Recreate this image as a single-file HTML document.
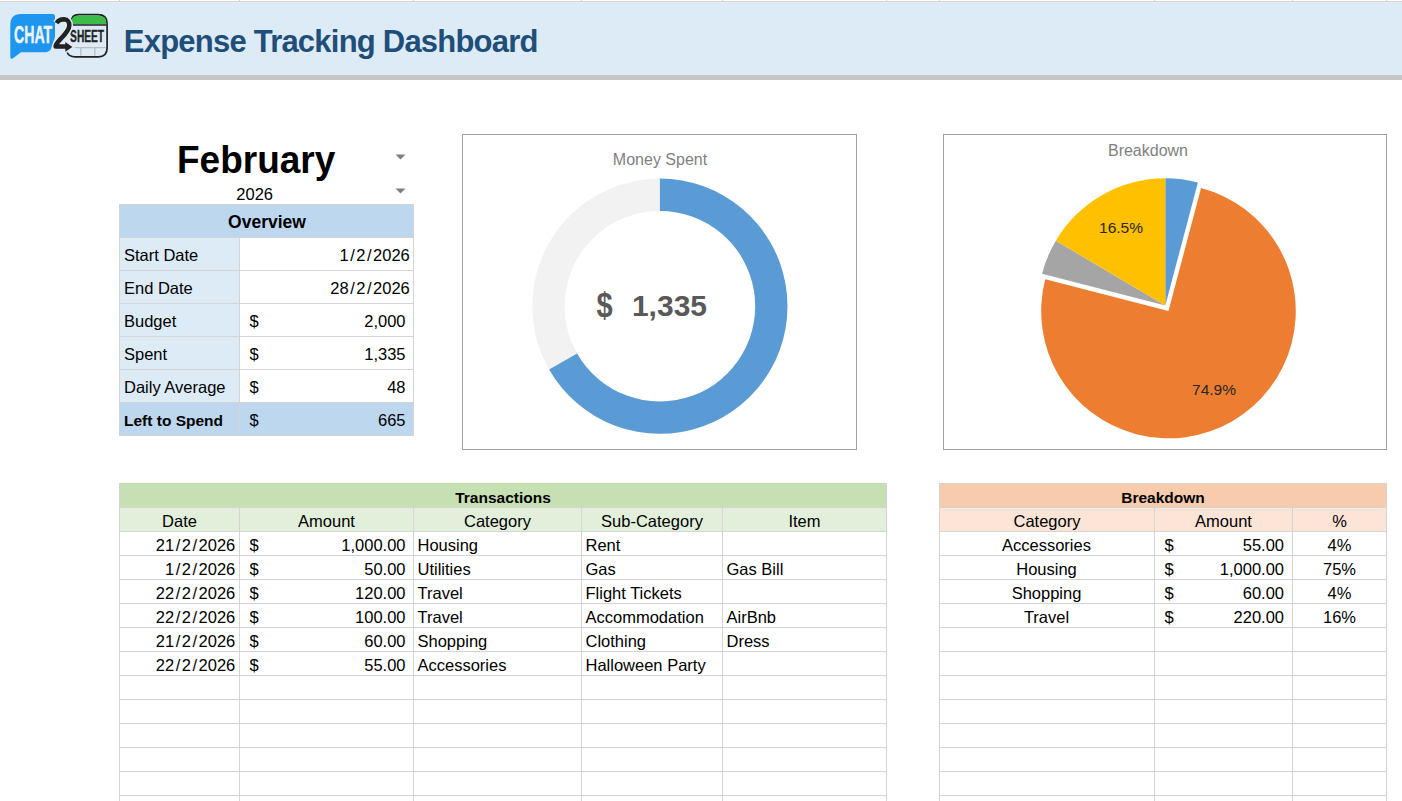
<!DOCTYPE html>
<html><head><meta charset="utf-8"><style>
html,body{margin:0;padding:0;background:#fff;}
body{width:1402px;height:801px;overflow:hidden;position:relative;font-family:"Liberation Sans",sans-serif;}
.r{position:absolute;}
.t{position:absolute;line-height:24px;white-space:nowrap;}
</style></head><body>
<div class="r" style="left:0px;top:1px;width:1402px;height:1px;background:#D4D4D4;"></div>
<div class="r" style="left:119px;top:0px;width:1px;height:1px;background:#D4D4D4;"></div>
<div class="r" style="left:239px;top:0px;width:1px;height:1px;background:#D4D4D4;"></div>
<div class="r" style="left:413px;top:0px;width:1px;height:1px;background:#D4D4D4;"></div>
<div class="r" style="left:581px;top:0px;width:1px;height:1px;background:#D4D4D4;"></div>
<div class="r" style="left:722px;top:0px;width:1px;height:1px;background:#D4D4D4;"></div>
<div class="r" style="left:886px;top:0px;width:1px;height:1px;background:#D4D4D4;"></div>
<div class="r" style="left:939px;top:0px;width:1px;height:1px;background:#D4D4D4;"></div>
<div class="r" style="left:1154px;top:0px;width:1px;height:1px;background:#D4D4D4;"></div>
<div class="r" style="left:1292px;top:0px;width:1px;height:1px;background:#D4D4D4;"></div>
<div class="r" style="left:1386px;top:0px;width:1px;height:1px;background:#D4D4D4;"></div>
<div class="r" style="left:0px;top:2px;width:1402px;height:73px;background:#DDEBF7;"></div>
<div class="r" style="left:0px;top:75px;width:1402px;height:5px;background:#C6C6C6;"></div>
<svg class="r" style="left:0;top:0" width="120" height="75" viewBox="0 0 120 75">
<path d="M21,14 H52.5 Q55,14 55,16.5 V37 L51.5,47.5 Q50,52.2 45,52.2 H21 L13,58.2 Q10.3,59.8 10.3,56.5 V25 Q10.3,14 21,14 Z" fill="#1E96F0"/>
<text transform="translate(14.0,42.6) scale(0.585,1)" font-family="Liberation Sans" font-weight="700" font-size="24.2" fill="#EEF3F8" stroke="#EEF3F8" stroke-width="0.5">CHAT</text>
<path d="M71.4,24.5 V22 Q71.4,14.7 78.5,14.7 H98 Q107.1,14.7 107.1,23.5 V48 Q107.1,56.8 98.5,56.8 H75 Q69,56.8 67.2,52.5" fill="none" stroke="#222" stroke-width="1.7"/>
<path d="M71.4,24.3 V22 Q71.4,15.5 78.5,15.5 H98 Q106.2,15.5 106.2,23 V24.3 Z" fill="#3DBB4A"/>
<path d="M71.4,25 H106.5" stroke="#222" stroke-width="1.4" fill="none"/>
<path d="M74.7,47.7 H106 M80.8,47.7 V55.8 M94.8,47.7 V55.8" stroke="#BDBDBD" stroke-width="1.3" fill="none"/>
<text transform="translate(70.1,41.8) scale(0.60,1)" font-family="Liberation Sans" font-weight="700" font-size="17" fill="#222" stroke="#222" stroke-width="0.4">SHEET</text>
<path d="M56.6,23.2 C58.6,19.6 61.5,19.3 64,19.3 C68,19.4 69.4,22.3 69.3,25.6 C69.1,30 65.5,33.8 61.5,38 C58.2,41.5 55.6,44 55.6,46.6 H66" fill="none" stroke="#DDEBF7" stroke-width="7.5" stroke-linejoin="miter"/>
<path d="M56.6,23.2 C58.6,19.6 61.5,19.3 64,19.3 C68,19.4 69.4,22.3 69.3,25.6 C69.1,30 65.5,33.8 61.5,38 C58.2,41.5 55.6,44 55.6,46.6 H66" fill="none" stroke="#222" stroke-width="4.5" stroke-linejoin="round"/>
<path d="M65.3,42 L72.4,46.9 L65.3,51.8 Z" fill="#222"/>
</svg>
<div class="t" style="left:123.80px;top:29.56px;width:400px;text-align:left;font-size:31px;font-weight:700;color:#1F4E79;letter-spacing:-0.78px;">Expense Tracking Dashboard</div>
<div class="t" style="left:106.20px;top:149.18px;width:300px;text-align:center;font-size:37px;font-weight:700;color:#000;transform:scaleY(1.04);transform-origin:0 20px;">February</div>
<div class="t" style="left:154.70px;top:181.78px;width:200px;text-align:center;font-size:16.5px;color:#000;">2026</div>
<svg class="r" style="left:395px;top:153.7px" width="11" height="6"><path d="M0.5,0.5 L10.5,0.5 L5.5,5.5 Z" fill="#808080"/></svg>
<svg class="r" style="left:395px;top:188px" width="11" height="6"><path d="M0.5,0.5 L10.5,0.5 L5.5,5.5 Z" fill="#808080"/></svg>
<div class="r" style="left:120px;top:205px;width:293px;height:32px;background:#BDD7EE;"></div>
<div class="r" style="left:120px;top:238px;width:119px;height:32px;background:#DDEBF7;"></div>
<div class="r" style="left:120px;top:271px;width:119px;height:32px;background:#DDEBF7;"></div>
<div class="r" style="left:120px;top:304px;width:119px;height:32px;background:#DDEBF7;"></div>
<div class="r" style="left:120px;top:337px;width:119px;height:32px;background:#DDEBF7;"></div>
<div class="r" style="left:120px;top:370px;width:119px;height:32px;background:#DDEBF7;"></div>
<div class="r" style="left:120px;top:403px;width:293px;height:32px;background:#BDD7EE;"></div>
<div class="r" style="left:119px;top:204px;width:295px;height:1px;background:#D4D4D4;"></div>
<div class="r" style="left:119px;top:237px;width:295px;height:1px;background:#D4D4D4;"></div>
<div class="r" style="left:119px;top:270px;width:295px;height:1px;background:#D4D4D4;"></div>
<div class="r" style="left:119px;top:303px;width:295px;height:1px;background:#D4D4D4;"></div>
<div class="r" style="left:119px;top:336px;width:295px;height:1px;background:#D4D4D4;"></div>
<div class="r" style="left:119px;top:369px;width:295px;height:1px;background:#D4D4D4;"></div>
<div class="r" style="left:119px;top:402px;width:295px;height:1px;background:#D4D4D4;"></div>
<div class="r" style="left:119px;top:435px;width:295px;height:1px;background:#D4D4D4;"></div>
<div class="r" style="left:119px;top:204px;width:1px;height:232px;background:#D4D4D4;"></div>
<div class="r" style="left:413px;top:204px;width:1px;height:232px;background:#D4D4D4;"></div>
<div class="r" style="left:239px;top:237px;width:1px;height:198px;background:#D4D4D4;"></div>
<div class="t" style="left:167.00px;top:209.64px;width:200px;text-align:center;font-size:17.5px;font-weight:700;color:#000;">Overview</div>
<div class="t" style="left:124.00px;top:243.28px;width:400px;text-align:left;font-size:16.5px;color:#000;">Start Date</div>
<div class="t" style="left:259.80px;top:243.28px;width:150px;text-align:right;font-size:16.5px;color:#000;">1<span style="margin:0 1.5px">/</span>2<span style="margin:0 1.5px">/</span>2026</div>
<div class="t" style="left:124.00px;top:276.28px;width:400px;text-align:left;font-size:16.5px;color:#000;">End Date</div>
<div class="t" style="left:259.80px;top:276.28px;width:150px;text-align:right;font-size:16.5px;color:#000;">28<span style="margin:0 1.5px">/</span>2<span style="margin:0 1.5px">/</span>2026</div>
<div class="t" style="left:124.00px;top:309.28px;width:400px;text-align:left;font-size:16.5px;color:#000;">Budget</div>
<div class="t" style="left:249.50px;top:309.28px;width:400px;text-align:left;font-size:16.5px;color:#000;">$</div>
<div class="t" style="left:255.50px;top:309.28px;width:150px;text-align:right;font-size:16.5px;color:#000;">2,000</div>
<div class="t" style="left:124.00px;top:342.28px;width:400px;text-align:left;font-size:16.5px;color:#000;">Spent</div>
<div class="t" style="left:249.50px;top:342.28px;width:400px;text-align:left;font-size:16.5px;color:#000;">$</div>
<div class="t" style="left:255.50px;top:342.28px;width:150px;text-align:right;font-size:16.5px;color:#000;">1,335</div>
<div class="t" style="left:124.00px;top:375.28px;width:400px;text-align:left;font-size:16.5px;color:#000;">Daily Average</div>
<div class="t" style="left:249.50px;top:375.28px;width:400px;text-align:left;font-size:16.5px;color:#000;">$</div>
<div class="t" style="left:255.50px;top:375.28px;width:150px;text-align:right;font-size:16.5px;color:#000;">48</div>
<div class="t" style="left:124.00px;top:408.63px;width:400px;text-align:left;font-size:15.5px;font-weight:700;color:#000;">Left to Spend</div>
<div class="t" style="left:249.50px;top:408.28px;width:400px;text-align:left;font-size:16.5px;color:#000;">$</div>
<div class="t" style="left:255.50px;top:408.28px;width:150px;text-align:right;font-size:16.5px;color:#000;">665</div>
<div class="r" style="left:462px;top:134px;width:395px;height:316px;background:#fff;box-sizing:border-box;border:1px solid #A0A0A0;"></div>
<div class="r" style="left:943px;top:134px;width:444px;height:316px;background:#fff;box-sizing:border-box;border:1px solid #A0A0A0;"></div>
<svg class="r" style="left:0;top:0" width="1402" height="801">
<path d="M549.06,369.42 A127.6,127.6 0 0 1 659.90,178.60 L659.90,210.90 A95.3,95.3 0 0 0 577.12,353.42 Z" fill="#F2F2F2"/>
<path d="M659.90,178.60 A127.6,127.6 0 1 1 549.06,369.42 L577.12,353.42 A95.3,95.3 0 1 0 659.90,210.90 Z" fill="#5B9BD5"/>
<path d="M1165.30,305.60 L1165.30,178.30 A127.3,127.3 0 0 1 1197.89,182.54 Z" fill="#5B9BD5"/>
<path d="M1168.48,311.04 L1201.07,187.98 A127.3,127.3 0 1 1 1045.23,279.18 Z" fill="#ED7D31"/>
<path d="M1165.30,305.60 L1042.05,273.74 A127.3,127.3 0 0 1 1055.81,240.66 Z" fill="#A5A5A5"/>
<path d="M1165.30,305.60 L1055.81,240.66 A127.3,127.3 0 0 1 1165.30,178.30 Z" fill="#FFC000"/>
</svg>
<div class="t" style="left:560.00px;top:148.46px;width:200px;text-align:center;font-size:16px;color:#7F7F7F;">Money Spent</div>
<div class="t" style="left:1048.00px;top:139.46px;width:200px;text-align:center;font-size:16px;color:#7F7F7F;">Breakdown</div>
<div class="t" style="left:596.50px;top:293.95px;width:400px;text-align:left;font-size:29px;font-weight:700;color:#595959;transform:scaleY(1.22);transform-origin:0 15.2px;">$</div>
<div class="t" style="left:507.00px;top:293.91px;width:200px;text-align:right;font-size:30px;font-weight:700;color:#595959;">1,335</div>
<div class="t" style="left:1071.00px;top:216.13px;width:100px;text-align:center;font-size:15.5px;color:#262626;">16.5%</div>
<div class="t" style="left:1164.00px;top:377.63px;width:100px;text-align:center;font-size:15.5px;color:#262626;">74.9%</div>
<div class="r" style="left:120px;top:483px;width:766px;height:24px;background:#C6E0B4;"></div>
<div class="r" style="left:120px;top:483px;width:766px;height:1px;background:#C1DCAB;"></div>
<div class="r" style="left:120px;top:508px;width:766px;height:23px;background:#E2EFDA;"></div>
<div class="r" style="left:119px;top:507px;width:768px;height:1px;background:#D4D4D4;"></div>
<div class="r" style="left:119px;top:531px;width:768px;height:1px;background:#D4D4D4;"></div>
<div class="r" style="left:119px;top:555px;width:768px;height:1px;background:#D4D4D4;"></div>
<div class="r" style="left:119px;top:579px;width:768px;height:1px;background:#D4D4D4;"></div>
<div class="r" style="left:119px;top:603px;width:768px;height:1px;background:#D4D4D4;"></div>
<div class="r" style="left:119px;top:627px;width:768px;height:1px;background:#D4D4D4;"></div>
<div class="r" style="left:119px;top:651px;width:768px;height:1px;background:#D4D4D4;"></div>
<div class="r" style="left:119px;top:675px;width:768px;height:1px;background:#D4D4D4;"></div>
<div class="r" style="left:119px;top:699px;width:768px;height:1px;background:#D4D4D4;"></div>
<div class="r" style="left:119px;top:723px;width:768px;height:1px;background:#D4D4D4;"></div>
<div class="r" style="left:119px;top:747px;width:768px;height:1px;background:#D4D4D4;"></div>
<div class="r" style="left:119px;top:771px;width:768px;height:1px;background:#D4D4D4;"></div>
<div class="r" style="left:119px;top:795px;width:768px;height:1px;background:#D4D4D4;"></div>
<div class="r" style="left:119px;top:483px;width:1px;height:318px;background:#D4D4D4;"></div>
<div class="r" style="left:886px;top:483px;width:1px;height:318px;background:#D4D4D4;"></div>
<div class="r" style="left:239px;top:507px;width:1px;height:294px;background:#D4D4D4;"></div>
<div class="r" style="left:413px;top:507px;width:1px;height:294px;background:#D4D4D4;"></div>
<div class="r" style="left:581px;top:507px;width:1px;height:294px;background:#D4D4D4;"></div>
<div class="r" style="left:722px;top:507px;width:1px;height:294px;background:#D4D4D4;"></div>
<div class="t" style="left:353.00px;top:486.13px;width:300px;text-align:center;font-size:15.5px;font-weight:700;color:#000;">Transactions</div>
<div class="t" style="left:79.50px;top:508.88px;width:200px;text-align:center;font-size:16.5px;color:#000;">Date</div>
<div class="t" style="left:226.50px;top:508.88px;width:200px;text-align:center;font-size:16.5px;color:#000;">Amount</div>
<div class="t" style="left:397.50px;top:508.88px;width:200px;text-align:center;font-size:16.5px;color:#000;">Category</div>
<div class="t" style="left:552.00px;top:508.88px;width:200px;text-align:center;font-size:16.5px;color:#000;">Sub-Category</div>
<div class="t" style="left:704.50px;top:508.88px;width:200px;text-align:center;font-size:16.5px;color:#000;">Item</div>
<div class="t" style="left:85.30px;top:533.28px;width:150px;text-align:right;font-size:16.5px;color:#000;">21<span style="margin:0 1.5px">/</span>2<span style="margin:0 1.5px">/</span>2026</div>
<div class="t" style="left:249.50px;top:533.28px;width:400px;text-align:left;font-size:16.5px;color:#000;">$</div>
<div class="t" style="left:255.50px;top:533.28px;width:150px;text-align:right;font-size:16.5px;color:#000;">1,000.00</div>
<div class="t" style="left:417.50px;top:533.28px;width:400px;text-align:left;font-size:16.5px;color:#000;">Housing</div>
<div class="t" style="left:585.50px;top:533.28px;width:400px;text-align:left;font-size:16.5px;color:#000;">Rent</div>
<div class="t" style="left:85.30px;top:557.28px;width:150px;text-align:right;font-size:16.5px;color:#000;">1<span style="margin:0 1.5px">/</span>2<span style="margin:0 1.5px">/</span>2026</div>
<div class="t" style="left:249.50px;top:557.28px;width:400px;text-align:left;font-size:16.5px;color:#000;">$</div>
<div class="t" style="left:255.50px;top:557.28px;width:150px;text-align:right;font-size:16.5px;color:#000;">50.00</div>
<div class="t" style="left:417.50px;top:557.28px;width:400px;text-align:left;font-size:16.5px;color:#000;">Utilities</div>
<div class="t" style="left:585.50px;top:557.28px;width:400px;text-align:left;font-size:16.5px;color:#000;">Gas</div>
<div class="t" style="left:726.50px;top:557.28px;width:400px;text-align:left;font-size:16.5px;color:#000;">Gas Bill</div>
<div class="t" style="left:85.30px;top:581.28px;width:150px;text-align:right;font-size:16.5px;color:#000;">22<span style="margin:0 1.5px">/</span>2<span style="margin:0 1.5px">/</span>2026</div>
<div class="t" style="left:249.50px;top:581.28px;width:400px;text-align:left;font-size:16.5px;color:#000;">$</div>
<div class="t" style="left:255.50px;top:581.28px;width:150px;text-align:right;font-size:16.5px;color:#000;">120.00</div>
<div class="t" style="left:417.50px;top:581.28px;width:400px;text-align:left;font-size:16.5px;color:#000;">Travel</div>
<div class="t" style="left:585.50px;top:581.28px;width:400px;text-align:left;font-size:16.5px;color:#000;">Flight Tickets</div>
<div class="t" style="left:85.30px;top:605.28px;width:150px;text-align:right;font-size:16.5px;color:#000;">22<span style="margin:0 1.5px">/</span>2<span style="margin:0 1.5px">/</span>2026</div>
<div class="t" style="left:249.50px;top:605.28px;width:400px;text-align:left;font-size:16.5px;color:#000;">$</div>
<div class="t" style="left:255.50px;top:605.28px;width:150px;text-align:right;font-size:16.5px;color:#000;">100.00</div>
<div class="t" style="left:417.50px;top:605.28px;width:400px;text-align:left;font-size:16.5px;color:#000;">Travel</div>
<div class="t" style="left:585.50px;top:605.28px;width:400px;text-align:left;font-size:16.5px;color:#000;">Accommodation</div>
<div class="t" style="left:726.50px;top:605.28px;width:400px;text-align:left;font-size:16.5px;color:#000;">AirBnb</div>
<div class="t" style="left:85.30px;top:629.28px;width:150px;text-align:right;font-size:16.5px;color:#000;">21<span style="margin:0 1.5px">/</span>2<span style="margin:0 1.5px">/</span>2026</div>
<div class="t" style="left:249.50px;top:629.28px;width:400px;text-align:left;font-size:16.5px;color:#000;">$</div>
<div class="t" style="left:255.50px;top:629.28px;width:150px;text-align:right;font-size:16.5px;color:#000;">60.00</div>
<div class="t" style="left:417.50px;top:629.28px;width:400px;text-align:left;font-size:16.5px;color:#000;">Shopping</div>
<div class="t" style="left:585.50px;top:629.28px;width:400px;text-align:left;font-size:16.5px;color:#000;">Clothing</div>
<div class="t" style="left:726.50px;top:629.28px;width:400px;text-align:left;font-size:16.5px;color:#000;">Dress</div>
<div class="t" style="left:85.30px;top:653.28px;width:150px;text-align:right;font-size:16.5px;color:#000;">22<span style="margin:0 1.5px">/</span>2<span style="margin:0 1.5px">/</span>2026</div>
<div class="t" style="left:249.50px;top:653.28px;width:400px;text-align:left;font-size:16.5px;color:#000;">$</div>
<div class="t" style="left:255.50px;top:653.28px;width:150px;text-align:right;font-size:16.5px;color:#000;">55.00</div>
<div class="t" style="left:417.50px;top:653.28px;width:400px;text-align:left;font-size:16.5px;color:#000;">Accessories</div>
<div class="t" style="left:585.50px;top:653.28px;width:400px;text-align:left;font-size:16.5px;color:#000;">Halloween Party</div>
<div class="r" style="left:940px;top:484px;width:446px;height:23px;background:#F8CBAD;"></div>
<div class="r" style="left:940px;top:508px;width:446px;height:23px;background:#FCE4D6;"></div>
<div class="r" style="left:939px;top:483px;width:448px;height:1px;background:#D4D4D4;"></div>
<div class="r" style="left:939px;top:507px;width:448px;height:1px;background:#D4D4D4;"></div>
<div class="r" style="left:939px;top:531px;width:448px;height:1px;background:#D4D4D4;"></div>
<div class="r" style="left:939px;top:555px;width:448px;height:1px;background:#D4D4D4;"></div>
<div class="r" style="left:939px;top:579px;width:448px;height:1px;background:#D4D4D4;"></div>
<div class="r" style="left:939px;top:603px;width:448px;height:1px;background:#D4D4D4;"></div>
<div class="r" style="left:939px;top:627px;width:448px;height:1px;background:#D4D4D4;"></div>
<div class="r" style="left:939px;top:651px;width:448px;height:1px;background:#D4D4D4;"></div>
<div class="r" style="left:939px;top:675px;width:448px;height:1px;background:#D4D4D4;"></div>
<div class="r" style="left:939px;top:699px;width:448px;height:1px;background:#D4D4D4;"></div>
<div class="r" style="left:939px;top:723px;width:448px;height:1px;background:#D4D4D4;"></div>
<div class="r" style="left:939px;top:747px;width:448px;height:1px;background:#D4D4D4;"></div>
<div class="r" style="left:939px;top:771px;width:448px;height:1px;background:#D4D4D4;"></div>
<div class="r" style="left:939px;top:795px;width:448px;height:1px;background:#D4D4D4;"></div>
<div class="r" style="left:939px;top:483px;width:1px;height:318px;background:#D4D4D4;"></div>
<div class="r" style="left:1386px;top:483px;width:1px;height:318px;background:#D4D4D4;"></div>
<div class="r" style="left:1154px;top:507px;width:1px;height:294px;background:#D4D4D4;"></div>
<div class="r" style="left:1292px;top:507px;width:1px;height:294px;background:#D4D4D4;"></div>
<div class="t" style="left:1013.00px;top:486.13px;width:300px;text-align:center;font-size:15.5px;font-weight:700;color:#000;">Breakdown</div>
<div class="t" style="left:947.00px;top:508.88px;width:200px;text-align:center;font-size:16.5px;color:#000;">Category</div>
<div class="t" style="left:1123.50px;top:508.88px;width:200px;text-align:center;font-size:16.5px;color:#000;">Amount</div>
<div class="t" style="left:1239.50px;top:508.88px;width:200px;text-align:center;font-size:16.5px;color:#000;">%</div>
<div class="t" style="left:946.50px;top:533.28px;width:200px;text-align:center;font-size:16.5px;color:#000;">Accessories</div>
<div class="t" style="left:1164.50px;top:533.28px;width:400px;text-align:left;font-size:16.5px;color:#000;">$</div>
<div class="t" style="left:1134.00px;top:533.28px;width:150px;text-align:right;font-size:16.5px;color:#000;">55.00</div>
<div class="t" style="left:1294.50px;top:533.28px;width:90px;text-align:center;font-size:16.5px;color:#000;">4%</div>
<div class="t" style="left:946.50px;top:557.28px;width:200px;text-align:center;font-size:16.5px;color:#000;">Housing</div>
<div class="t" style="left:1164.50px;top:557.28px;width:400px;text-align:left;font-size:16.5px;color:#000;">$</div>
<div class="t" style="left:1134.00px;top:557.28px;width:150px;text-align:right;font-size:16.5px;color:#000;">1,000.00</div>
<div class="t" style="left:1294.50px;top:557.28px;width:90px;text-align:center;font-size:16.5px;color:#000;">75%</div>
<div class="t" style="left:946.50px;top:581.28px;width:200px;text-align:center;font-size:16.5px;color:#000;">Shopping</div>
<div class="t" style="left:1164.50px;top:581.28px;width:400px;text-align:left;font-size:16.5px;color:#000;">$</div>
<div class="t" style="left:1134.00px;top:581.28px;width:150px;text-align:right;font-size:16.5px;color:#000;">60.00</div>
<div class="t" style="left:1294.50px;top:581.28px;width:90px;text-align:center;font-size:16.5px;color:#000;">4%</div>
<div class="t" style="left:946.50px;top:605.28px;width:200px;text-align:center;font-size:16.5px;color:#000;">Travel</div>
<div class="t" style="left:1164.50px;top:605.28px;width:400px;text-align:left;font-size:16.5px;color:#000;">$</div>
<div class="t" style="left:1134.00px;top:605.28px;width:150px;text-align:right;font-size:16.5px;color:#000;">220.00</div>
<div class="t" style="left:1294.50px;top:605.28px;width:90px;text-align:center;font-size:16.5px;color:#000;">16%</div>
</body></html>
